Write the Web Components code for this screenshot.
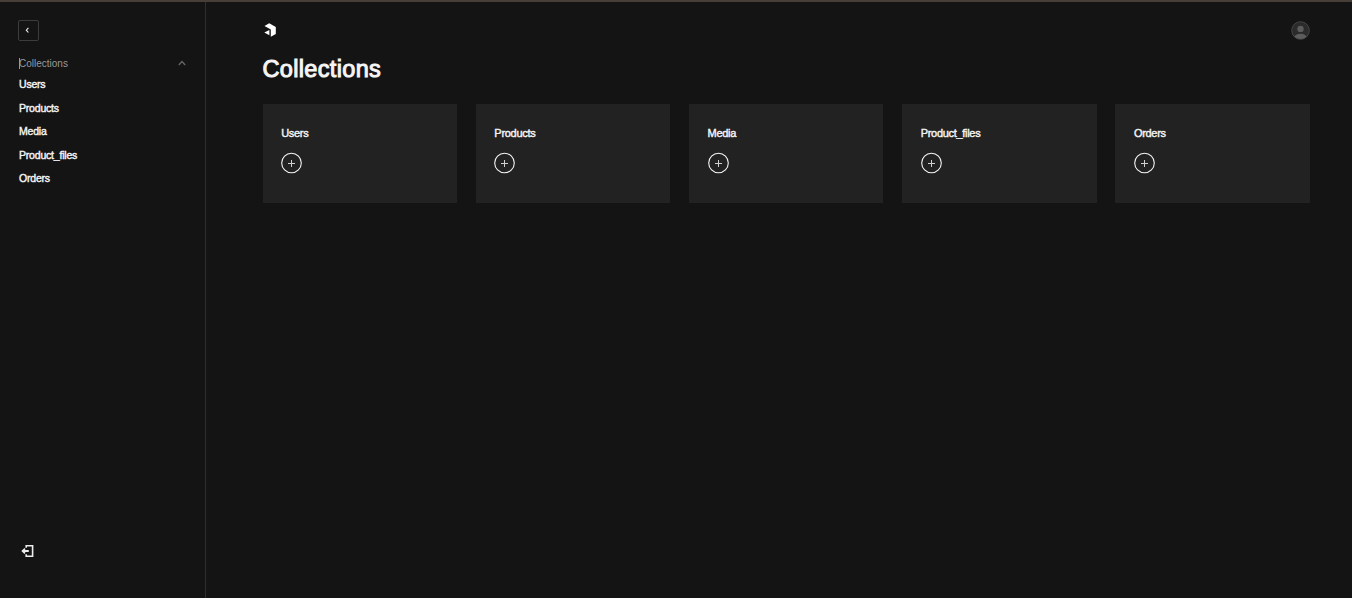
<!DOCTYPE html>
<html lang="en">
<head>
  <meta charset="UTF-8">
  <meta name="viewport" content="width=device-width, initial-scale=1.0">
  <title>Dashboard</title>
  <style>
    html, body { height: 100%; }
    body {
      margin: 0;
      background: #141414;
      color: #f5f5f5;
      font-family: "Liberation Sans", Arial, sans-serif;
      overflow: hidden;
    }
  </style>
</head>
<body>
  <admin-layout>
    <admin-nav slot="nav">
      <nav-link>Users</nav-link>
      <nav-link>Products</nav-link>
      <nav-link>Media</nav-link>
      <nav-link>Product_files</nav-link>
      <nav-link>Orders</nav-link>
    </admin-nav>
    <admin-header></admin-header>
    <collection-list heading="Collections">
      <collection-card>Users</collection-card>
      <collection-card>Products</collection-card>
      <collection-card>Media</collection-card>
      <collection-card>Product_files</collection-card>
      <collection-card>Orders</collection-card>
    </collection-list>
  </admin-layout>

  <script>
    class AdminLayout extends HTMLElement {
      constructor() {
        super();
        this.attachShadow({ mode: 'open' });
      }

      connectedCallback() {
        this.shadowRoot.innerHTML = `
          <style>
            :host {
              display: grid;
              grid-template-columns: 206px 1fr;
              height: 100vh;
              box-sizing: border-box;
              border-top: 2px solid #483e38;
            }
            main { padding: 18px 42.3px 0 56.6px; }
          </style>
          <slot name="nav"></slot>
          <main><slot></slot></main>
        `;
      }
    }

    class AdminNav extends HTMLElement {
      constructor() {
        super();
        this.attachShadow({ mode: 'open' });
      }

      connectedCallback() {
        this.shadowRoot.innerHTML = `
          <style>
            :host {
              display: flex;
              flex-direction: column;
              box-sizing: border-box;
              padding: 18px 18px 40px;
              border-right: 1px solid #2f2f2f;
            }
            svg { display: block; fill: none; }
            .toggle {
              box-sizing: border-box;
              width: 21px;
              height: 21px;
              padding: 0;
              background: none;
              border: 1px solid #3c3c3c;
              border-radius: 2px;
            }
            .group {
              display: flex;
              justify-content: space-between;
              align-items: center;
              height: 13px;
              margin-top: 16px;
              padding: 0 1px;
              color: #9a9a9a;
              font-size: 10px;
            }
            .group svg { margin-bottom: 2px; }
            .label {
              border-left: 1px solid #9a9a9a;
              line-height: 11px;
              text-indent: -1px;
            }
            .links {
              display: flex;
              flex-direction: column;
              padding: 8px 0 0 1px;
            }
            .logout { margin: auto 0 0 3px; }
          </style>
          <button class="toggle" aria-label="Close menu">
            <svg width="19" height="19" viewBox="0 0 19 19" stroke="#f0f0f0" stroke-width="1.1">
              <path d="M9.4 6.9 7.3 9.2l2.1 2.3"/>
            </svg>
          </button>
          <div class="group">
            <span class="label">Collections</span>
            <svg width="8" height="6" viewBox="0 0 8 6" stroke="#666" stroke-width="1.3">
              <path d="M.8 5 4 1.5 7.2 5"/>
            </svg>
          </div>
          <div class="links"><slot></slot></div>
          <svg class="logout" width="13" height="14" viewBox="0 0 13 14" stroke="#ededed" stroke-width="1.6">
            <path d="M5.2 3.8V1.8h6.4v10.4H5.2v-2"/>
            <path d="M7.8 7H2" stroke-width="2"/>
            <path d="M4 4.6 1.5 7 4 9.4"/>
          </svg>
        `;
      }
    }

    class NavLink extends HTMLElement {
      constructor() {
        super();
        this.attachShadow({ mode: 'open' });
      }

      connectedCallback() {
        this.shadowRoot.innerHTML = `
          <style>
            :host {
              display: block;
              height: 23.5px;
              line-height: 13px;
              font-size: 10.5px;
              letter-spacing: -0.2px;
              -webkit-text-stroke: 0.4px currentColor;
            }
          </style>
          <slot></slot>
        `;
      }
    }

    class AdminHeader extends HTMLElement {
      constructor() {
        super();
        this.attachShadow({ mode: 'open' });
      }

      connectedCallback() {
        this.shadowRoot.innerHTML = `
          <style>
            :host {
              display: flex;
              justify-content: space-between;
              align-items: center;
              height: 21px;
            }
            svg { display: block; }
            .logo { margin: 0 0 1px 1.4px; }
          </style>
          <svg class="logo" width="12" height="14" viewBox="0 0 12 14" fill="#fff">
            <path d="M5.2.3 11.8 4v7L6.8 13.8V6.4L.5 2.9z"/>
            <path d="M5.4 12.2V6.9L.3 9.6z"/>
          </svg>
          <svg width="19" height="19" viewBox="0 0 19 19">
            <defs><clipPath id="disc"><circle cx="9.5" cy="9.5" r="8.6"/></clipPath></defs>
            <circle cx="9.5" cy="9.5" r="8.8" fill="#2b2b2b" stroke="#464646"/>
            <g fill="#5c5c5c" clip-path="url(#disc)">
              <circle cx="9.5" cy="7.9" r="3.2"/>
              <ellipse cx="9.5" cy="17" rx="6.5" ry="4.2"/>
            </g>
          </svg>
        `;
      }
    }

    class CollectionList extends HTMLElement {
      constructor() {
        super();
        this.attachShadow({ mode: 'open' });
      }

      connectedCallback() {
        const heading = this.getAttribute('heading') || '';

        this.shadowRoot.innerHTML = `
          <style>
            :host { display: block; }
            h1 {
              margin: 13px 0 20px -0.2px;
              line-height: 30px;
              font-size: 23.5px;
              font-weight: 400;
              letter-spacing: 0.35px;
              -webkit-text-stroke: 1px currentColor;
            }
            .cards {
              display: grid;
              grid-template-columns: repeat(5, 1fr);
              gap: 18.75px;
            }
          </style>
          <h1>${heading}</h1>
          <div class="cards"><slot></slot></div>
        `;
      }
    }

    class CollectionCard extends HTMLElement {
      constructor() {
        super();
        this.attachShadow({ mode: 'open' });
      }

      connectedCallback() {
        this.shadowRoot.innerHTML = `
          <style>
            :host {
              display: block;
              box-sizing: border-box;
              height: 99px;
              padding: 22px 18.6px;
              background: #222;
            }
            .title {
              line-height: 14px;
              font-size: 11px;
              letter-spacing: -0.3px;
              -webkit-text-stroke: 0.4px currentColor;
            }
            svg { display: block; margin-top: 12px; }
          </style>
          <div class="title"><slot></slot></div>
          <svg width="21" height="22" viewBox="0 0 21 22" fill="none" stroke="#f5f5f5">
            <circle cx="10.5" cy="11" r="9.8" stroke-width="1.1"/>
            <path d="M10.5 8v7M7 11.5h7" stroke="#d0d0d0"/>
          </svg>
        `;
      }
    }

    customElements.define('admin-layout', AdminLayout);
    customElements.define('admin-nav', AdminNav);
    customElements.define('nav-link', NavLink);
    customElements.define('admin-header', AdminHeader);
    customElements.define('collection-list', CollectionList);
    customElements.define('collection-card', CollectionCard);
  </script>
</body>
</html>
